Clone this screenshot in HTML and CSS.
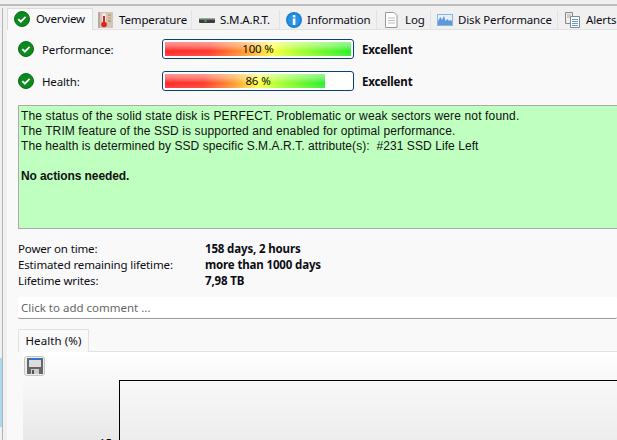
FILE: index.html
```html
<!DOCTYPE html>
<html lang="en">
<head>
<meta charset="utf-8">
<title>Overview</title>
<link rel="stylesheet" href="styles.css">
</head>
<body>
<div class="app">
  <div class="topline"></div>
  <div class="row">
    <div class="edge"><div class="edge-blue"></div></div>
    <div class="main">
      <div class="tabs">
        <div class="tab active"><svg class="ico" viewBox="0 0 16 16"><circle cx="8" cy="8" r="7.500" fill="#0b8a1e"/><circle cx="8" cy="8" r="7.500" fill="none" stroke="#0a6d18"/><path d="M4.300 8.200l2.500 2.500 4.800-4.800" fill="none" stroke="#fff" stroke-width="1.800"/></svg>Overview</div>
        <div class="tab t-temp"><svg class="ico" viewBox="0 0 16 16"><rect x="0" y="0" width="15" height="16" fill="#d3c3b8"/><rect x="0" y="0" width="2" height="16" fill="#b9a79b"/><rect x="4" y="1" width="4" height="11" rx="2" fill="#f4e9e2"/><rect x="5" y="4" width="2" height="8" fill="#d8261c"/><circle cx="6" cy="12.500" r="2.800" fill="#d8261c"/><path d="M10 3h3" stroke="#7fae3c"/><path d="M10 6h3" stroke="#c7a83c"/><path d="M10 9h3" stroke="#c7763c"/></svg>Temperature</div>
        <div class="tab t-smart"><svg class="ico" viewBox="0 0 16 16"><rect x="0" y="6" width="16" height="5" rx="1" fill="#3c3c3c"/><rect x="0" y="6" width="16" height="1.500" fill="#a5a5a5"/><rect x="5" y="8.500" width="3" height="1" fill="#3fdc3f"/></svg>S.M.A.R.T.</div>
        <div class="tab t-info"><svg class="ico" viewBox="0 0 16 16"><circle cx="8" cy="8" r="8" fill="#1b82d8"/><circle cx="8" cy="8" r="6" fill="#2a92e4"/><rect x="6.800" y="6.500" width="2.600" height="6.500" fill="#fff"/><rect x="6.800" y="3" width="2.600" height="2.400" fill="#fff"/></svg>Information</div>
        <div class="tab t-log"><svg class="ico" viewBox="0 0 16 16"><path d="M1.500.5h8.500l3 3v12h-11.500z" fill="#fff" stroke="#999"/><path d="M4 6h7M4 8.500h7M4 11h7" stroke="#bbb"/></svg>Log</div>
        <div class="tab t-disk"><svg class="ico" viewBox="0 0 16 16"><rect x=".5" y="2.500" width="15" height="11" fill="#e4effa" stroke="#8fb3d9"/><path d="M1 13V9l2.500-4 1.500 3 2-4 1.500 5 2-2 1.500 2 1-1 2 1v4z" fill="#5d9ad8"/></svg>Disk Performance</div>
        <div class="tab t-alert"><svg class="ico" viewBox="0 0 16 16"><path d="M.5.500h7v11h-7z" fill="#eee" stroke="#888"/><path d="M2 3h4M2 5h3" stroke="#aaa"/><path d="M5.500 4.500h9v11h-9z" fill="#fff" stroke="#888"/><path d="M7 7.500h6M7 9.500h6M7 11.500h6M7 13.500h6" stroke="#5d9ad8"/></svg>Alerts</div>
      </div>
      <div class="page">
        <div class="meter-row">
          <svg class="ico" viewBox="0 0 16 16"><circle cx="8" cy="8" r="7.500" fill="#0b8a1e"/><circle cx="8" cy="8" r="7.500" fill="none" stroke="#0a6d18"/><path d="M4.300 8.200l2.500 2.500 4.800-4.800" fill="none" stroke="#fff" stroke-width="1.800"/></svg>
          <span class="meter-label">Performance:</span>
          <div class="meter"><div class="fill full"></div><span class="pct">100 %</span></div>
          <b class="rating">Excellent</b>
        </div>
        <div class="meter-row">
          <svg class="ico" viewBox="0 0 16 16"><circle cx="8" cy="8" r="7.500" fill="#0b8a1e"/><circle cx="8" cy="8" r="7.500" fill="none" stroke="#0a6d18"/><path d="M4.300 8.200l2.500 2.500 4.800-4.800" fill="none" stroke="#fff" stroke-width="1.800"/></svg>
          <span class="meter-label">Health:</span>
          <div class="meter"><div class="fill part"></div><span class="pct">86 %</span></div>
          <b class="rating">Excellent</b>
        </div>
        <div class="status">
          <p class="l1">The status of the solid state disk is PERFECT. Problematic or weak sectors were not found.</p>
          <p class="l2">The TRIM feature of the SSD is supported and enabled for optimal performance.</p>
          <p class="l3">The health is determined by SSD specific S.M.A.R.T. attribute(s):&nbsp; #231 SSD Life Left</p>
          <p class="gap"><b>No actions needed.</b></p>
        </div>
        <dl class="facts">
          <dt>Power on time:</dt><dd>158 days, 2 hours</dd>
          <dt>Estimated remaining lifetime:</dt><dd>more than 1000 days</dd>
          <dt>Lifetime writes:</dt><dd>7,98 TB</dd>
        </dl>
        <div class="comment">Click to add comment ...</div>
        <div class="subtabs"><div class="subtab">Health (%)</div></div>
        <div class="chart-panel">
          <div class="save"><svg viewBox="0 0 16 16" width="16" height="16"><path d="M0 0h16v16H0z" fill="#666"/><rect x="2" y="0" width="12" height="2" fill="#2f76c9"/><rect x="2" y="2" width="12" height="7" fill="#ddd"/><rect x="4" y="11" width="8" height="5" fill="#ccc"/><rect x="5" y="12" width="2" height="4" fill="#555"/></svg></div>
          <div class="plot"><span class="tick">15</span></div>
        </div>
      </div>
    </div>
  </div>
</div>
</body>
</html>
```
FILE: styles.css
```css
* { box-sizing: border-box; }
html, body { margin: 0; height: 100%; overflow: hidden; }
body { background: #f0f0f0; font: 11.5px/16px "Noto Sans", sans-serif; letter-spacing: -.15px; color: #0c0c14; }
.app { display: flex; flex-direction: column; height: 440px; padding-top: 4px; }
.topline { height: 2px; flex: none; background: #bdbdbd; }
.row { flex: 1; display: flex; min-height: 0; }
.edge { width: 3px; margin-top: 2px; flex: none; border-right: 1px solid #b4b4b4; padding-top: 350px; }
.edge-blue { height: 69px; background: #a8d8ee; }
.main { flex: 1; min-width: 0; padding: 2px 0 0 4px; display: flex; flex-direction: column; overflow: hidden; }
.tabs { display: flex; height: 22px; flex: none; white-space: nowrap; }
.tab { display: flex; align-items: center; gap: 5px; padding-left: 6px; height: 20px; margin-top: 2px; background: #f0f0f0; border-right: 1px solid #e2e2e2; border-bottom: 1px solid #e2e2e2; flex: none; }
.tab.active { width: 86px; height: 22px; margin-top: 0; background: #f9f9f9; border: 1px solid #dcdcdc; border-bottom: 0; gap: 6px; padding-bottom: 2px; }
.t-temp { width: 99px; padding-left: 5px; }
.t-smart { width: 88px; padding-left: 7px; }
.t-info { width: 97px; }
.t-log { width: 54px; padding-left: 7px; }
.t-disk { width: 127px; }
.t-alert { flex: 1 0 auto; padding-left: 7px; border-right: 0; }
.ico { width: 16px; height: 16px; flex: none; }
.page { flex: 1; background: #f9f9f9; padding: 9px 0 0 11px; display: flex; flex-direction: column; min-width: 0; }
.meter-row { display: flex; align-items: center; height: 20px; margin-bottom: 12px; flex: none; }
.meter-label { margin-left: 8px; width: 120px; padding-top: 1px; }
.meter { position: relative; width: 192px; height: 20px; border: 1px solid #0a3f78; border-radius: 3px; background: #fff; padding: 2px; }
.fill { height: 14px; background: linear-gradient(to bottom, rgba(255,255,255,.5), rgba(255,255,255,.35) 30%, rgba(255,255,255,0) 65%, rgba(255,255,255,.12)), linear-gradient(to right, #ff2a2a 0, #ff3a2a 24%, #ffa030 44%, #ffff40 58%, #b0ff30 70%, #28f028 100%); }
.fill.full { width: 100%; }
.fill.part { width: 86%; }
.pct { position: absolute; inset: 0; text-align: center; line-height: 17px; }
.rating { margin-left: 8px; font-weight: 700; padding-top: 1px; }
.status { margin-top: 2px; height: 124px; flex: none; background: #bfffbf; border: 1px solid #aaa; border-right: 0; padding: 3px 2px 0; font: 12px/15px "Liberation Sans", sans-serif; color: #111; }
.status p { margin: 0; }
.status .l1 { letter-spacing: .15px; }
.status .l2 { letter-spacing: .1px; }
.status .l3 { letter-spacing: .07px; }
.status .gap { margin-top: 15px; letter-spacing: -.1px; }
.facts { display: grid; grid-template-columns: 187px 1fr; margin: 12px 0 0; flex: none; }
.facts dd { margin: 0; font-weight: 700; }
.comment { margin-top: 8px; height: 22px; flex: none; background: #fff; border-bottom: 1px solid #999; border-radius: 2px; padding: 3px 3px; color: #666; letter-spacing: 0; }
.subtabs { margin-top: 10px; height: 23px; border-bottom: 1px solid #e2e2e2; display: flex; flex: none; }
.subtab { height: 23px; width: 71px; text-align: center; line-height: 22px; background: #f9f9f9; border: 1px solid #e2e2e2; border-bottom: 0; letter-spacing: .1px; }
.chart-panel { position: relative; flex: 1; margin-left: 5px; background: linear-gradient(#fff, #e8e8e8); padding: 4px 0 0 1px; }
.save { width: 21px; height: 20px; border: 1px solid #c4c4c4; border-radius: 3px; background: #eee; display: flex; align-items: center; justify-content: center; }
.plot { position: absolute; left: 96px; top: 28px; right: -2px; height: 100px; border: 1px solid #000; background: linear-gradient(#f8f8f8, #e6e6e6); }
.tick { position: absolute; left: -21px; top: 54px; }
```
